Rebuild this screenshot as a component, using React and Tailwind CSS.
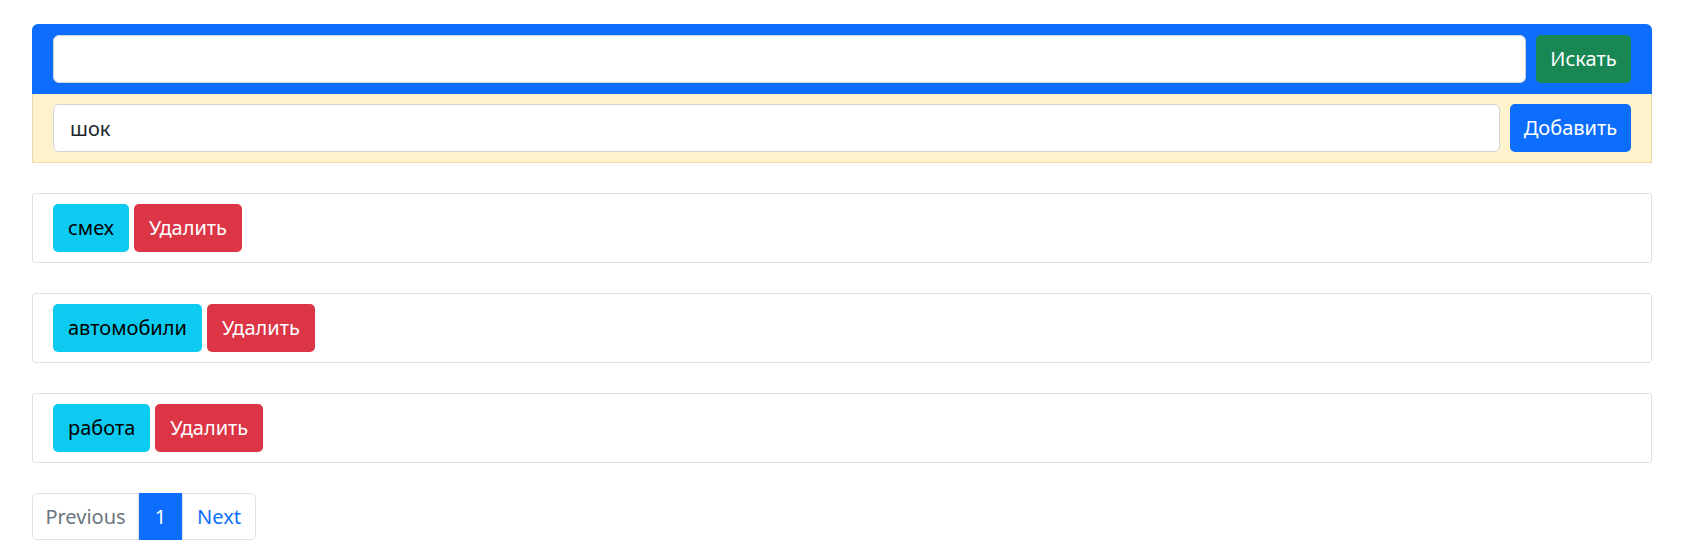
import React, { useState } from 'react';

const font = { fontFamily: '"Noto Sans", "Open Sans", Arial, sans-serif' };

const tags = ['смех', 'автомобили', 'работа'];

const TagRow = ({ name }) => {
  return (
    <div className="border border-[#dee2e6] rounded-[3px] px-[20px] py-[10px] flex gap-[5px]">
      <button className="bg-[#0dcaf0] text-black rounded-[5px] h-[48px] px-[15px] text-[20px]">{name}</button>
      <button className="bg-[#dc3545] text-white rounded-[5px] h-[48px] px-[15px] text-[20px]">Удалить</button>
    </div>
  );
};

export default function App() {
  const [query, setQuery] = useState('');
  const [newTag, setNewTag] = useState('шок');

  return (
    <div className="bg-white min-h-[558px] pt-[24px] pl-[32px] text-[#212529]" style={font}>
      <div className="w-[1620px]">
        <div className="bg-[#0d6efd] rounded-t-[6px] px-[21px] py-[11px] flex gap-[10px]">
          <input
            value={query}
            onChange={(e) => setQuery(e.target.value)}
            className="flex-1 h-[48px] bg-white rounded-[6px] border border-[#ced4da] px-[16px] text-[20px] outline-none"
          />
          <button className="bg-[#198754] text-white rounded-[5px] h-[48px] w-[95px] text-[20px]">Искать</button>
        </div>
        <div className="bg-[#fff3cd] border border-t-0 border-[#eadca8] px-[20px] py-[10px] flex gap-[10px]">
          <input
            value={newTag}
            onChange={(e) => setNewTag(e.target.value)}
            className="flex-1 h-[48px] bg-white rounded-[6px] border border-[#ced4da] px-[16px] text-[20px] text-[#212529] outline-none"
          />
          <button className="bg-[#0d6efd] text-white rounded-[5px] h-[48px] w-[121px] text-[20px]">Добавить</button>
        </div>

        <div className="mt-[30px] flex flex-col gap-[30px]">
          {tags.map((t) => (
            <TagRow key={t} name={t} />
          ))}
        </div>

        <div className="mt-[30px] flex h-[47px] text-[20px]">
          <button className="border border-[#dee2e6] rounded-l-[5px] w-[107px] text-[#6c757d] bg-white">Previous</button>
          <button className="bg-[#0d6efd] text-white w-[43px]">1</button>
          <button className="border border-[#dee2e6] rounded-r-[5px] w-[74px] text-[#0d6efd] bg-white">Next</button>
        </div>
      </div>
    </div>
  );
}
